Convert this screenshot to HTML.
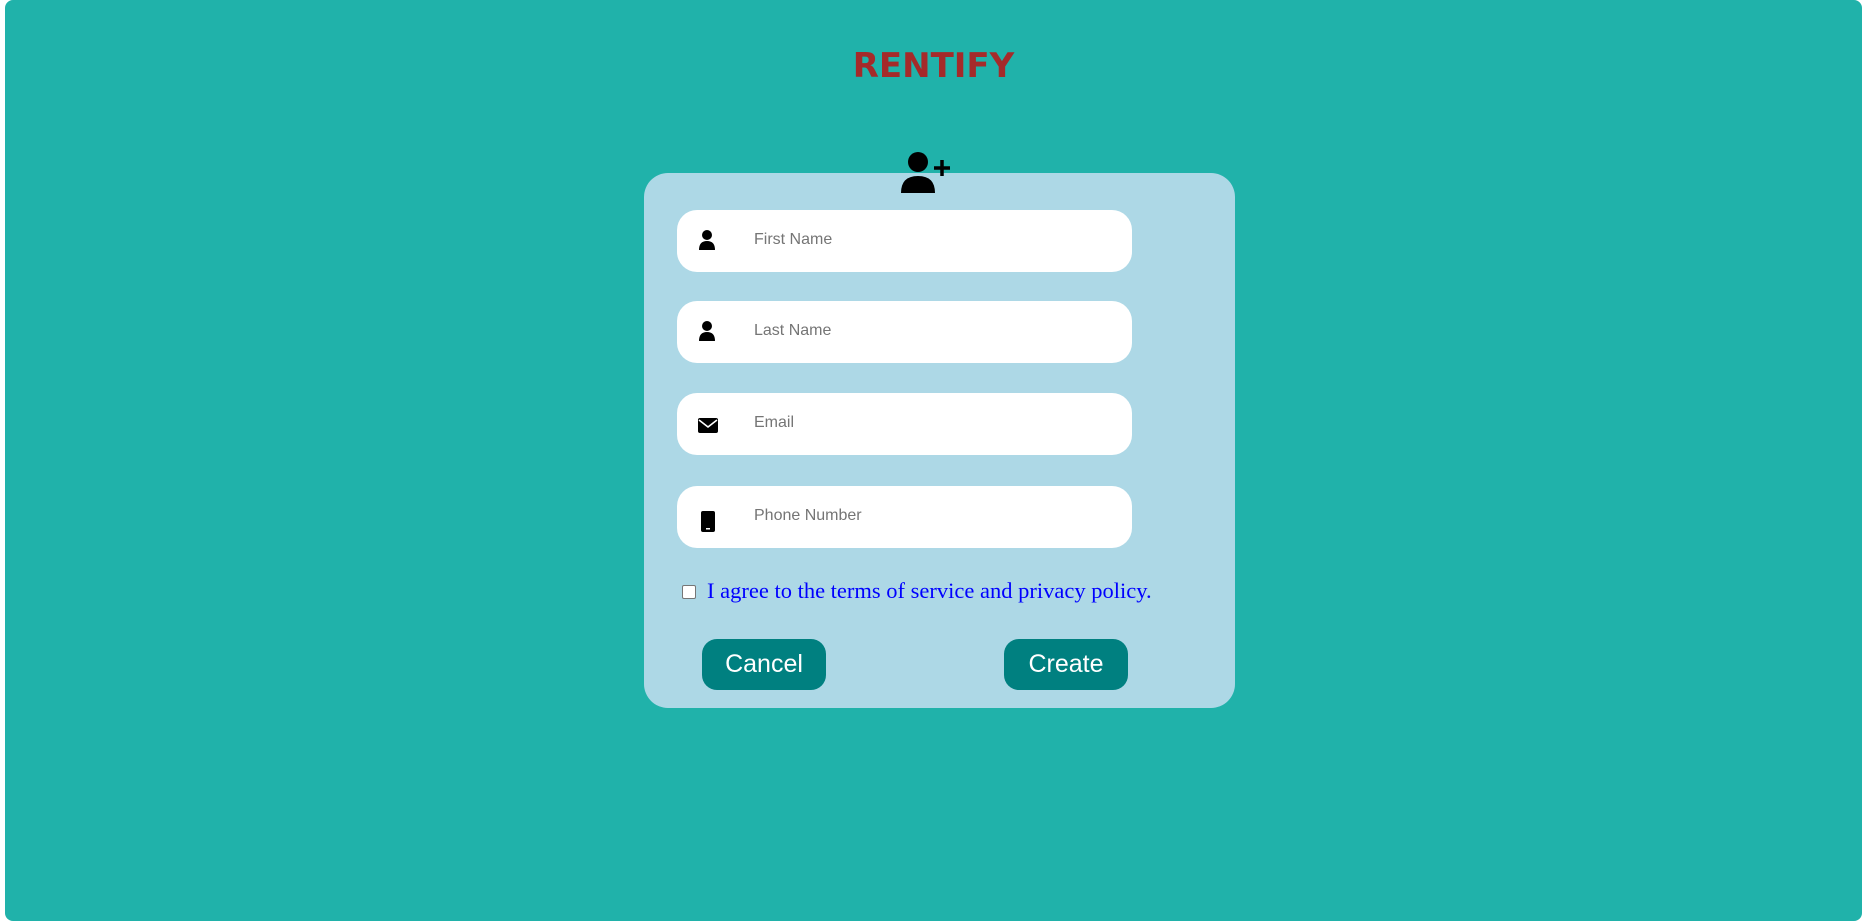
<!DOCTYPE html>
<html><head><style>
body{margin:0;background:#fff;width:1867px;height:921px;overflow:hidden;font-family:"Liberation Sans",sans-serif}
.frame{position:absolute;left:5px;top:0;width:1857px;height:921px;background:#20B2AA;border-radius:8px}
.title{position:absolute;left:0;width:1867px;top:46px;text-align:center;font-size:34px;font-weight:bold;color:#A52A2A;font-family:"Comic Sans MS","DejaVu Sans",sans-serif}
.card{position:absolute;left:644px;top:173px;width:591px;height:535px;background:#ADD8E6;border-radius:24px}
.inp{position:absolute;left:677px;width:455px;height:62px;background:#fff;border-radius:20px}
.inp span{position:absolute;left:77px;top:21px;font-size:16px;color:#757575}
.inp svg{position:absolute;left:20px;top:19px}
.btn{position:absolute;top:639px;width:124px;height:51px;background:#008080;border-radius:15px;color:#fff;font-size:25px;text-align:center;line-height:51px}
.chk{position:absolute;left:682px;top:585px;width:12px;height:12px;border:1px solid #767676;border-radius:2px;background:#fff}
.agree{position:absolute;left:707px;top:578px;font-family:"Liberation Serif",serif;font-size:22.5px;color:#0000FF}
</style></head><body>
<div class="frame"></div>
<div class="title">RENTIFY</div>
<div class="card"></div>
<svg style="position:absolute;left:900px;top:152px" width="52" height="42" viewBox="0 0 52 42">
<circle cx="18" cy="10" r="10" fill="#000"/>
<path d="M1 41 Q1 24 18 24 Q35 24 35 41 Z" fill="#000"/>
<path d="M42 8 V24 M34 16 H50" stroke="#000" stroke-width="3.5"/>
</svg>
<div class="inp" style="top:210px"><svg width="20" height="22" viewBox="0 0 20 22"><circle cx="10" cy="6" r="5" fill="#000"/><path d="M2 21 Q2 12 10 12 Q18 12 18 21Z" fill="#000"/></svg><span>First Name</span></div>
<div class="inp" style="top:301px"><svg width="20" height="22" viewBox="0 0 20 22"><circle cx="10" cy="6" r="5" fill="#000"/><path d="M2 21 Q2 12 10 12 Q18 12 18 21Z" fill="#000"/></svg><span>Last Name</span></div>
<div class="inp" style="top:393px"><svg width="22" height="22" viewBox="0 0 22 22" style="top:22px"><rect x="1" y="3" width="20" height="15" rx="2" fill="#000"/><path d="M2 5 L11 12 L20 5" stroke="#fff" stroke-width="1.6" fill="none"/></svg><span>Email</span></div>
<div class="inp" style="top:486px"><svg width="22" height="24" viewBox="0 0 22 24" style="top:24px"><rect x="4" y="1" width="14" height="21" rx="2" fill="#000"/><rect x="9" y="18" width="4" height="1.5" fill="#fff"/></svg><span>Phone Number</span></div>
<div class="chk"></div>
<div class="agree">I agree to the terms of service and privacy policy.</div>
<div class="btn" style="left:702px">Cancel</div>
<div class="btn" style="left:1004px">Create</div>
</body></html>
